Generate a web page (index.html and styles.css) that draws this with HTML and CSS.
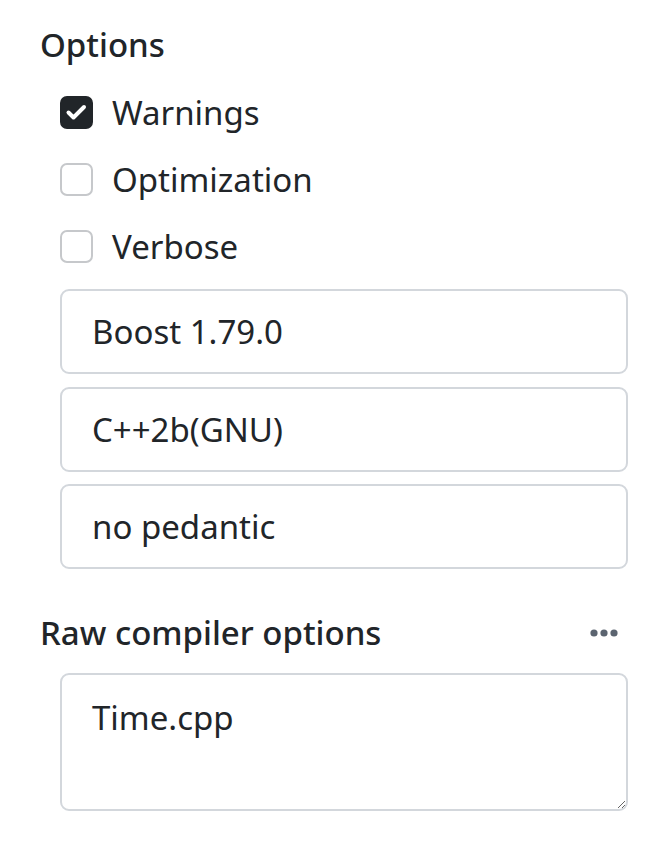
FILE: index.html
```html
<!DOCTYPE html>
<html>
<head>
<meta charset="utf-8">
<link rel="stylesheet" href="styles.css">
</head>
<body>
<div class="panel">
  <div class="heading">Options</div>
  <div class="checks">
    <label class="check"><span class="box checked"><svg viewBox="0 0 33 33" width="33" height="33"><path d="M8.5 16.5l5 5 10.5-10.5" fill="none" stroke="#fff" stroke-width="4" stroke-linecap="round" stroke-linejoin="round"/></svg></span><span class="label">Warnings</span></label>
    <label class="check"><span class="box"></span><span class="label">Optimization</span></label>
    <label class="check"><span class="box"></span><span class="label">Verbose</span></label>
  </div>
  <div class="fields">
    <div class="field">Boost 1.79.0</div>
    <div class="field">C++2b(GNU)</div>
    <div class="field">no pedantic</div>
  </div>
  <div class="heading-row">
    <div class="heading">Raw compiler options</div>
    <svg class="dots" viewBox="0 0 28 8" width="28" height="8"><circle cx="4" cy="4" r="3.6" fill="#5b6470"/><circle cx="14" cy="4" r="3.6" fill="#5b6470"/><circle cx="24" cy="4" r="3.6" fill="#5b6470"/></svg>
  </div>
  <textarea class="raw">Time.cpp</textarea>
</div>
</body>
</html>
```
FILE: styles.css
```css
html, body {
  margin: 0;
  padding: 0;
  background: #fff;
}
body {
  font-family: "Noto Sans", "Open Sans", sans-serif;
  color: #212529;
  font-size: 33px;
}
.panel {
  padding: 20px 35px 0 40px;
}
.heading {
  font-size: 33px;
  font-weight: 500;
  line-height: 50px;
  height: 50px;
}
.checks {
  margin: 9px 0 0 20px;
  display: flex;
  flex-direction: column;
}
.check {
  display: flex;
  align-items: center;
  height: 67px;
}
.box {
  width: 33px;
  height: 33px;
  box-sizing: border-box;
  border: 2px solid #c6c8cb;
  border-radius: 7px;
  display: flex;
  align-items: center;
  justify-content: center;
  margin-right: 19px;
  position: relative;
}
.box svg {
  position: absolute;
  left: -2px;
  top: -2px;
}
.box.checked {
  background: #212529;
  border-color: #212529;
}
.label {
  line-height: 50px;
}
.fields {
  margin: 9px 0 0 20px;
  display: flex;
  flex-direction: column;
  gap: 12.5px;
}
.field {
  height: 85px;
  box-sizing: border-box;
  border: 2px solid #d3d7dc;
  border-radius: 9px;
  padding: 0 30px;
  display: flex;
  align-items: center;
}
.heading-row {
  margin-top: 39px;
  display: flex;
  align-items: center;
  justify-content: space-between;
  padding-right: 10px;
}
.dots {
  display: block;
}
.raw {
  display: block;
  margin: 15px 0 0 20px;
  width: calc(100% - 20px);
  height: 138px;
  box-sizing: border-box;
  border: 2px solid #d3d7dc;
  border-radius: 9px;
  padding: 16px 30px;
  font-family: "Noto Sans", "Open Sans", sans-serif;
  font-size: 33px;
  line-height: 54px;
  color: #212529;
  resize: vertical;
  outline: none;
}
```
